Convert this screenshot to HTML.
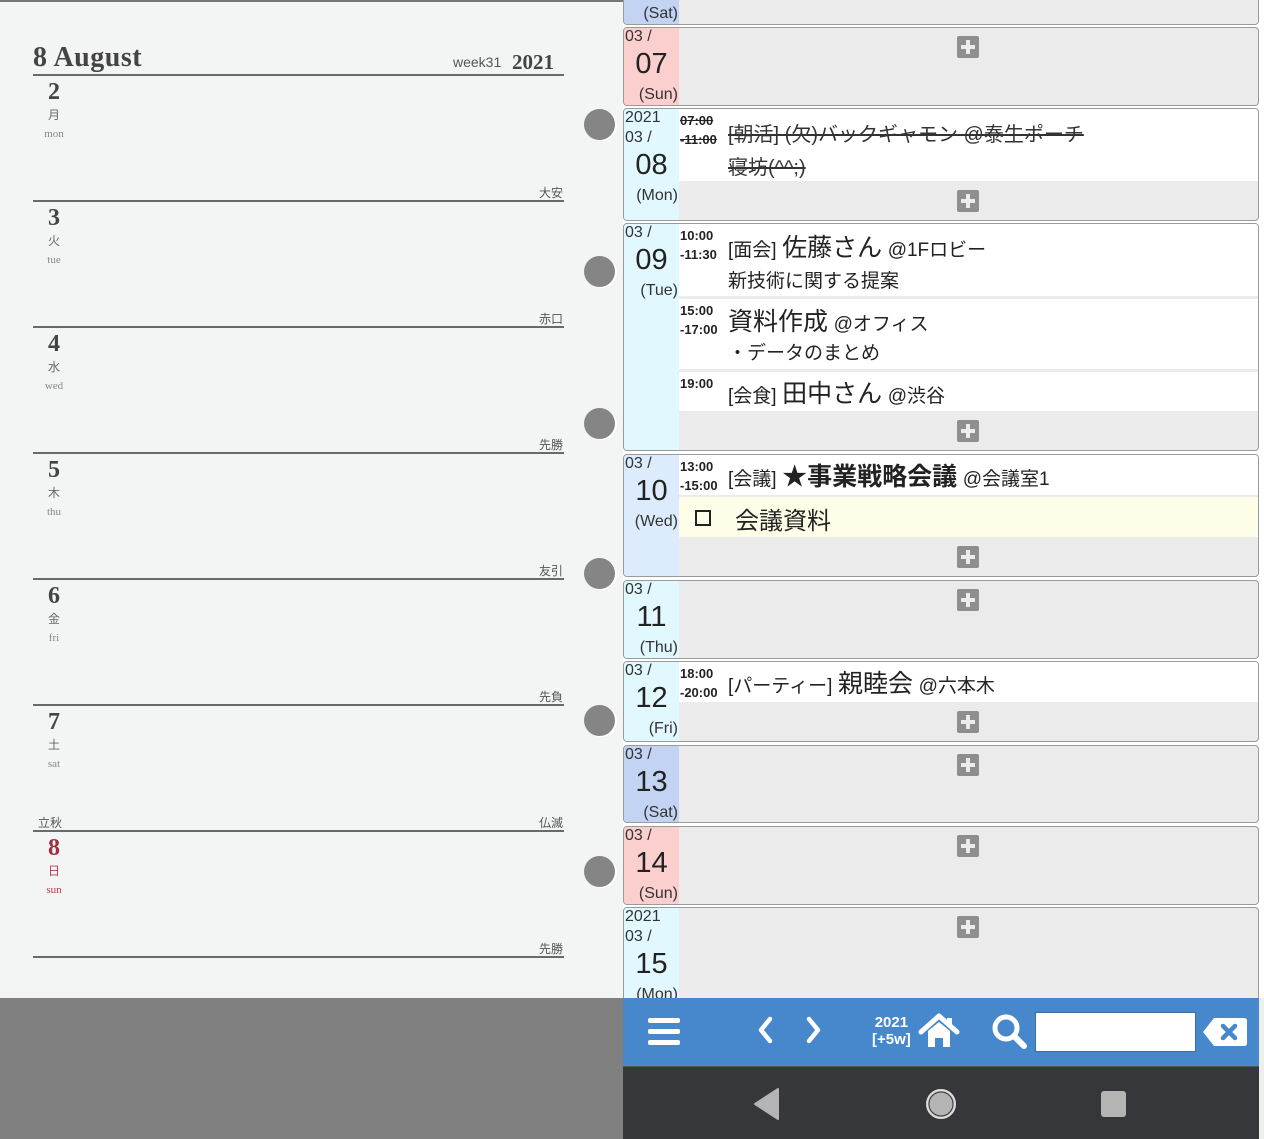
<!DOCTYPE html>
<html><head><meta charset="utf-8">
<style>
*{margin:0;padding:0;box-sizing:border-box}
body{width:1264px;height:1139px;position:relative;overflow:hidden;background:#fff;font-family:"Liberation Sans","Noto Sans CJK JP",sans-serif}
.a{position:absolute}
#left{left:0;top:0;width:623px;height:998px;background:#f3f4f4;border-top:2px solid #777}
.ln{position:absolute;left:33px;width:531px;height:2px;background:#6a6a6a}
.dn{position:absolute;left:42px;width:24px;text-align:center;font-family:"Liberation Serif",serif;font-weight:bold;font-size:24px;color:#444}
.dk{position:absolute;left:44px;width:20px;text-align:center;font-size:12px;color:#666}
.de{position:absolute;left:38px;width:32px;text-align:center;font-family:"Liberation Serif",serif;font-size:11px;color:#888}
.rk{position:absolute;right:60px;font-size:12px;color:#555}
.hole{position:absolute;left:584px;width:31px;height:31px;border-radius:50%;background:#858585;box-shadow:2px 1px 0 #fff}
.blk{position:absolute;left:623px;width:636px;border:1px solid #9a9a9a;border-radius:4px;background:#ebebeb;overflow:hidden}
.dc{position:absolute;left:0;top:0;bottom:0;width:55px}
.mo{position:absolute;left:1px;font-size:16px;color:#333}
.big{position:absolute;left:0;width:55px;text-align:center;font-size:29px;color:#222}
.wd{position:absolute;left:0;width:54px;text-align:right;font-size:16px;color:#333}
.ev{position:absolute;left:55px;right:0;background:#fff}
.tm{position:absolute;left:1px;font-size:13px;font-weight:bold;color:#222;line-height:19px}
.tx{position:absolute;left:49px;font-size:20px;color:#222;white-space:nowrap}
.sm{font-size:19px}
.plus{position:absolute;left:333px;width:22px;height:22px;background:#8e8e8e;border-radius:2px}
.plus:before{content:"";position:absolute;left:4px;top:9px;width:14px;height:4px;background:#ececec}
.plus:after{content:"";position:absolute;left:9px;top:4px;width:4px;height:14px;background:#ececec}
</style></head><body>
<div id="left" class="a">
<div class="a" style="left:33px;top:40px;font-family:'Liberation Serif',serif;font-weight:bold;font-size:28px;color:#444;letter-spacing:0.5px">8 August</div>
<div class="a" style="left:453px;top:52px;font-size:14px;color:#555">week31</div>
<div class="a" style="left:512px;top:48px;font-family:'Liberation Serif',serif;font-weight:bold;font-size:21px;color:#444">2021</div>
<div class="ln" style="top:72px"></div>
<div class="dn" style="top:77px">2</div><div class="dk" style="top:104px">月</div><div class="de" style="top:126px">mon</div>
<div class="rk" style="top:182px">大安</div><div class="ln" style="top:198px"></div>
<div class="dn" style="top:203px">3</div><div class="dk" style="top:230px">火</div><div class="de" style="top:252px">tue</div>
<div class="rk" style="top:308px">赤口</div><div class="ln" style="top:324px"></div>
<div class="dn" style="top:329px">4</div><div class="dk" style="top:356px">水</div><div class="de" style="top:378px">wed</div>
<div class="rk" style="top:434px">先勝</div><div class="ln" style="top:450px"></div>
<div class="dn" style="top:455px">5</div><div class="dk" style="top:482px">木</div><div class="de" style="top:504px">thu</div>
<div class="rk" style="top:560px">友引</div><div class="ln" style="top:576px"></div>
<div class="dn" style="top:581px">6</div><div class="dk" style="top:608px">金</div><div class="de" style="top:630px">fri</div>
<div class="rk" style="top:686px">先負</div><div class="ln" style="top:702px"></div>
<div class="dn" style="top:707px">7</div><div class="dk" style="top:734px">土</div><div class="de" style="top:756px">sat</div>
<div class="a" style="left:38px;top:812px;font-size:12px;color:#555">立秋</div>
<div class="rk" style="top:812px">仏滅</div><div class="ln" style="top:828px"></div>
<div class="dn" style="top:833px;color:#a03040">8</div><div class="dk" style="top:860px;color:#b04050">日</div><div class="de" style="top:882px;color:#b04050">sun</div>
<div class="rk" style="top:938px">先勝</div><div class="ln" style="top:954px"></div>
</div>
<div class="hole" style="top:109px"></div><div class="hole" style="top:256px"></div><div class="hole" style="top:408px"></div>
<div class="hole" style="top:558px"></div><div class="hole" style="top:705px"></div><div class="hole" style="top:856px"></div>

<div class="blk" style="top:-4px;height:29px"><div class="dc" style="background:#c3d3f3"></div><div class="wd" style="top:8px">(Sat)</div></div>

<div class="blk" style="top:27px;height:79px"><div class="dc" style="background:#fccfcf"></div>
<div class="mo" style="top:0">03 /</div><div class="big" style="top:20px">07</div><div class="wd" style="top:58px">(Sun)</div>
<div class="plus" style="top:8px"></div></div>

<div class="blk" style="top:108px;height:113px"><div class="dc" style="background:#e2f8ff"></div>
<div class="mo" style="top:0">2021</div><div class="mo" style="top:20px">03 /</div><div class="big" style="top:40px">08</div><div class="wd" style="top:78px">(Mon)</div>
<div class="ev" style="top:0;height:72px"><div class="tm" style="top:2px;text-decoration:line-through">07:00<br>-11:00</div>
<div class="tx" style="top:9px;text-decoration:line-through;color:#333">[朝活] (欠)バックギャモン @泰生ポーチ</div>
<div class="tx" style="top:42px;text-decoration:line-through;color:#333">寝坊(^^;)</div></div>
<div class="plus" style="top:81px"></div></div>

<div class="blk" style="top:223px;height:228px"><div class="dc" style="background:#e2f8ff"></div>
<div class="mo" style="top:0">03 /</div><div class="big" style="top:20px">09</div><div class="wd" style="top:58px">(Tue)</div>
<div class="ev" style="top:0;height:72px"><div class="tm" style="top:2px">10:00<br>-11:30</div>
<div class="tx" style="top:4px"><span class="sm">[面会]</span> <span style="font-size:25px">佐藤さん</span> <span class="sm">@1Fロビー</span></div>
<div class="tx sm" style="top:42px">新技術に関する提案</div></div>
<div class="ev" style="top:75px;height:70px"><div class="tm" style="top:2px">15:00<br>-17:00</div>
<div class="tx" style="top:3px"><span style="font-size:25px">資料作成</span> <span class="sm">@オフィス</span></div>
<div class="tx sm" style="top:39px">・データのまとめ</div></div>
<div class="ev" style="top:148px;height:39px"><div class="tm" style="top:2px">19:00</div>
<div class="tx" style="top:2px"><span class="sm">[会食]</span> <span style="font-size:25px">田中さん</span> <span class="sm">@渋谷</span></div></div>
<div class="plus" style="top:196px"></div></div>

<div class="blk" style="top:454px;height:123px"><div class="dc" style="background:#dcecfc"></div>
<div class="mo" style="top:0">03 /</div><div class="big" style="top:20px">10</div><div class="wd" style="top:58px">(Wed)</div>
<div class="ev" style="top:0;height:40px"><div class="tm" style="top:2px">13:00<br>-15:00</div>
<div class="tx" style="top:2px"><span class="sm">[会議]</span> <b style="font-size:25px">★事業戦略会議</b> <span class="sm">@会議室1</span></div></div>
<div class="ev" style="top:42px;height:40px;background:#fdfde8"><div class="a" style="left:16px;top:13px;width:16px;height:16px;border:2px solid #222"></div>
<div class="tx" style="left:56px;top:4px;font-size:24px">会議資料</div></div>
<div class="plus" style="top:91px"></div></div>

<div class="blk" style="top:580px;height:79px"><div class="dc" style="background:#e2f8ff"></div>
<div class="mo" style="top:0">03 /</div><div class="big" style="top:20px">11</div><div class="wd" style="top:58px">(Thu)</div>
<div class="plus" style="top:8px"></div></div>

<div class="blk" style="top:661px;height:81px"><div class="dc" style="background:#e2f8ff"></div>
<div class="mo" style="top:0">03 /</div><div class="big" style="top:20px">12</div><div class="wd" style="top:58px">(Fri)</div>
<div class="ev" style="top:0;height:40px"><div class="tm" style="top:2px">18:00<br>-20:00</div>
<div class="tx" style="top:2px"><span class="sm">[パーティー]</span> <span style="font-size:25px">親睦会</span> <span class="sm">@六本木</span></div></div>
<div class="plus" style="top:49px"></div></div>

<div class="blk" style="top:745px;height:78px"><div class="dc" style="background:#c3d3f3"></div>
<div class="mo" style="top:0">03 /</div><div class="big" style="top:20px">13</div><div class="wd" style="top:58px">(Sat)</div>
<div class="plus" style="top:8px"></div></div>

<div class="blk" style="top:826px;height:79px"><div class="dc" style="background:#fccfcf"></div>
<div class="mo" style="top:0">03 /</div><div class="big" style="top:20px">14</div><div class="wd" style="top:58px">(Sun)</div>
<div class="plus" style="top:8px"></div></div>

<div class="blk" style="top:907px;height:110px"><div class="dc" style="background:#e2f8ff"></div>
<div class="mo" style="top:0">2021</div><div class="mo" style="top:20px">03 /</div><div class="big" style="top:40px">15</div><div class="wd" style="top:78px">(Mon)</div>
<div class="plus" style="top:8px"></div></div>

<div class="a" style="left:0;top:998px;width:623px;height:141px;background:#808080"></div>
<div class="a" style="left:623px;top:998px;width:641px;height:68px;background:#4688cb"></div>
<div class="a" style="left:623px;top:1066px;width:641px;height:73px;background:#36373b;border-top:1px solid #555"></div>
<div class="a" style="left:1259px;top:998px;width:5px;height:141px;background:#eee"></div>
<div class="a" style="left:648px;top:1018px;width:32px;height:5px;background:#fff;border-radius:2px"></div>
<div class="a" style="left:648px;top:1029px;width:32px;height:5px;background:#fff;border-radius:2px"></div>
<div class="a" style="left:648px;top:1040px;width:32px;height:5px;background:#fff;border-radius:2px"></div>
<svg class="a" style="left:750px;top:1014px" width="80" height="32"><path d="M20 5 L11 16 L20 27" stroke="#fff" stroke-width="4.5" fill="none" stroke-linecap="round" stroke-linejoin="round"/><path d="M59 5 L68 16 L59 27" stroke="#fff" stroke-width="4.5" fill="none" stroke-linecap="round" stroke-linejoin="round"/></svg>
<div class="a" style="left:872px;top:1014px;font-size:15px;font-weight:bold;color:#fff;line-height:17px;text-align:center">2021<br>[+5w]</div>
<svg class="a" style="left:918px;top:1013px" width="42" height="36"><path d="M3 19 L21 3 L39 19" stroke="#fff" stroke-width="5" fill="none" stroke-linecap="round" stroke-linejoin="round"/><path d="M10 18 L21 9 L32 18 V34 H25 V25 H17 V34 H10 Z" fill="#fff"/><rect x="29" y="5" width="5" height="9" fill="#fff"/></svg>
<svg class="a" style="left:990px;top:1012px" width="40" height="40"><circle cx="16" cy="16" r="11" stroke="#fff" stroke-width="5" fill="none"/><path d="M24 24 L34 34" stroke="#fff" stroke-width="6" stroke-linecap="round"/></svg>
<div class="a" style="left:1035px;top:1012px;width:161px;height:40px;background:#fff;border:1px solid #3a70a8"></div>
<svg class="a" style="left:1202px;top:1017px" width="46" height="30"><path d="M12 1 H42 Q45 1 45 4 V26 Q45 29 42 29 H12 L1 15 Z" fill="#fff"/><path d="M21 9 L33 21 M33 9 L21 21" stroke="#4688cb" stroke-width="4.5" stroke-linecap="round"/></svg>
<svg class="a" style="left:750px;top:1085px" width="400" height="40"><path d="M5 19 L28 4 V34 Z" fill="#b4b4b4" stroke="#b4b4b4" stroke-width="2" stroke-linejoin="round"/><circle cx="191" cy="19" r="14" fill="#b4b4b4" stroke="#ddd" stroke-width="2"/><circle cx="191" cy="19" r="12" fill="#b4b4b4" stroke="#36373b" stroke-width="1"/><rect x="351" y="6" width="25" height="26" rx="3" fill="#b4b4b4"/></svg>
</body></html>
